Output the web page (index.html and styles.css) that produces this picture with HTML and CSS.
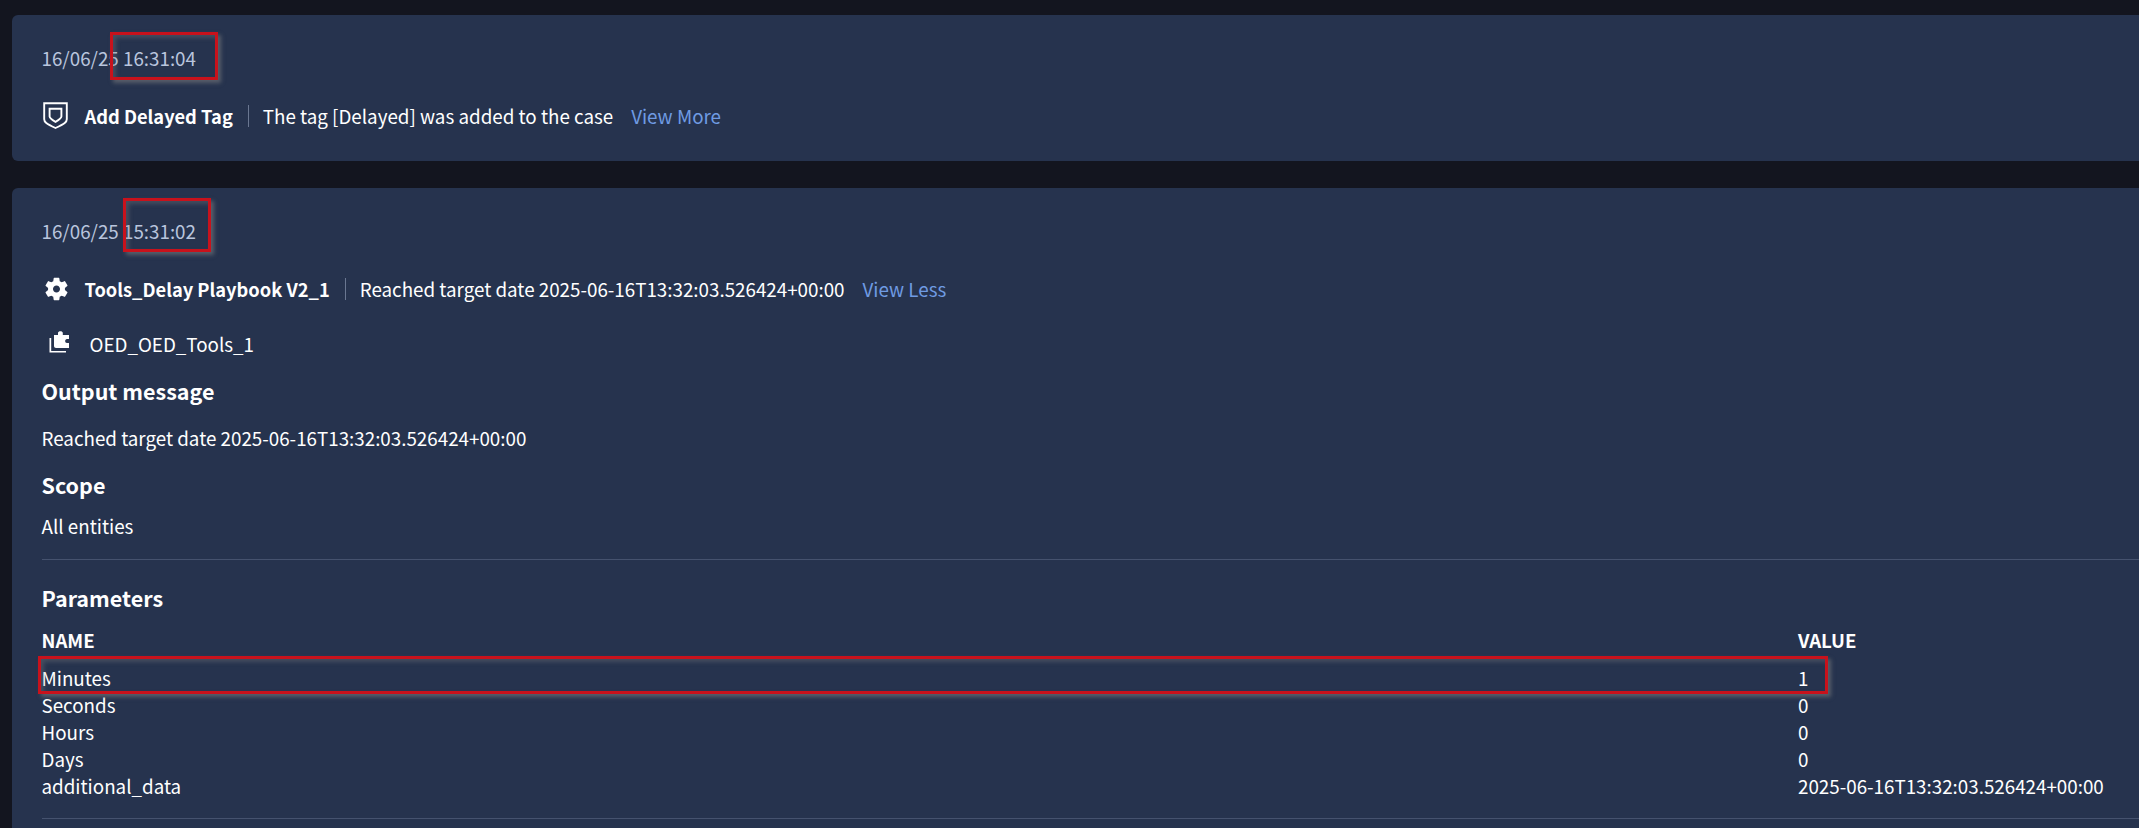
FILE: index.html
```html
<!DOCTYPE html>
<html lang="en">
<head>
<meta charset="utf-8">
<title>Case timeline</title>
<link rel="stylesheet" href="styles.css">
</head>
<body>
<main class="timeline">
  <section class="card card-short">
    <div class="date">16/06/25 16:31:04</div>
    <div class="event">
      <svg class="icon icon-shield" viewBox="0 0 25 27" fill="none" stroke="#fff" stroke-width="1.9"><path d="M1.2 1.2H23.8V17.2C23.8 20 22 21.6 12.5 26C3 21.6 1.2 20 1.2 17.2Z"/><path d="M6.6 6.8H18.4V14.6C18.4 16.2 17.4 17.2 12.5 19.8C7.6 17.2 6.6 16.2 6.6 14.6Z"/></svg>
      <strong class="event-name">Add Delayed Tag</strong>
      <span class="sep"></span>
      <span>The tag [Delayed] was added to the case</span>
      <a class="link">View More</a>
    </div>
    <div class="mark mark-a"></div>
  </section>
  <section class="card card-long">
    <div class="date">16/06/25 15:31:02</div>
    <div class="event">
      <svg class="icon icon-gear" viewBox="2.4 1.8 19.2 20.4" fill="#fff"><path fill-rule="evenodd" d="M19.14 12.94c.04-.3.06-.61.06-.94 0-.32-.02-.64-.07-.94l2.03-1.58c.18-.14.23-.41.12-.61l-1.92-3.32c-.12-.22-.37-.29-.59-.22l-2.39.96c-.5-.38-1.03-.7-1.62-.94l-.36-2.54c-.04-.24-.24-.41-.48-.41h-3.84c-.24 0-.43.17-.47.41l-.36 2.54c-.59.24-1.13.57-1.62.94l-2.39-.96c-.22-.08-.47 0-.59.22L2.74 8.87c-.12.21-.08.47.12.61l2.03 1.58c-.05.3-.09.63-.09.94s.02.64.07.94l-2.03 1.58c-.18.14-.23.41-.12.61l1.92 3.32c.12.22.37.29.59.22l2.39-.96c.5.38 1.03.7 1.62.94l.36 2.54c.05.24.24.41.48.41h3.84c.24 0 .44-.17.47-.41l.36-2.54c.59-.24 1.13-.56 1.62-.94l2.39.96c.22.08.47 0 .59-.22l1.92-3.32c.12-.22.07-.47-.12-.61l-2.01-1.58zM12 15c-1.65 0-3-1.35-3-3s1.35-3 3-3 3 1.35 3 3-1.35 3-3 3z"/></svg>
      <strong class="event-name">Tools_Delay Playbook V2_1</strong>
      <span class="sep"></span>
      <span>Reached target date 2025-06-16T13:32:03.526424+00:00</span>
      <a class="link">View Less</a>
    </div>
    <div class="integration">
      <svg class="icon icon-plugin" viewBox="0 0 22 24" fill="#fff"><path d="M5 17V6H9V4C9 1.5 13.8 1.5 13.8 4V6H20V10H18C15.6 10 15.6 14 18 14H20V19H7C5.9 19 5 18.1 5 17Z"/><path d="M0.5 9H2.2V22H17V23.6H0.5Z"/></svg>
      <span>OED_OED_Tools_1</span>
    </div>
    <h2 class="heading heading-output">Output message</h2>
    <p class="text text-output">Reached target date 2025-06-16T13:32:03.526424+00:00</p>
    <h2 class="heading heading-scope">Scope</h2>
    <p class="text text-scope">All entities</p>
    <hr class="rule">
    <h2 class="heading heading-params">Parameters</h2>
    <table class="params">
      <thead>
        <tr><th class="col-name">NAME</th><th>VALUE</th></tr>
      </thead>
      <tbody>
        <tr><td>Minutes</td><td>1</td></tr>
        <tr><td>Seconds</td><td>0</td></tr>
        <tr><td>Hours</td><td>0</td></tr>
        <tr><td>Days</td><td>0</td></tr>
        <tr><td>additional_data</td><td>2025-06-16T13:32:03.526424+00:00</td></tr>
      </tbody>
    </table>
    <hr class="rule rule-end">
    <div class="mark mark-b"></div>
    <div class="mark mark-c"></div>
  </section>
</main>
</body>
</html>
```
FILE: styles.css
```css
* { box-sizing: border-box; }
html, body { height: 100%; }
body {
  margin: 0;
  overflow: hidden;
  background: #13151f;
  color: #fff;
  font-family: "Noto Sans CJK SC", "Noto Sans", sans-serif;
  font-size: 18.8px;
  line-height: 27px;
}
.timeline {
  display: flex;
  flex-direction: column;
  gap: 27px;
  padding: 15px 0 0 12px;
}
.card {
  position: relative;
  background: #26334e;
  border-radius: 6px 0 0 6px;
  padding: 29px 0 0 29.5px;
}
.card-short { height: 146px; }
.card-long { height: 700px; border-radius: 6px 0 0 0; }
.date { color: #b9c5dd; }
.event {
  display: flex;
  align-items: center;
  height: 27px;
  margin-top: 31px;
}
.event-name { padding-top: 2px; font-size: 18.3px; font-weight: 700; }
.icon { display: block; flex: none; }
.icon-shield { width: 25px; height: 27px; margin: 0 17px 0 1px; }
.icon-gear { width: 23px; height: 24px; margin: 0 17px 0 3px; }
.icon-plugin { width: 22px; height: 24px; margin: -5px 19px 0 7px; }
.sep {
  width: 1px;
  height: 22px;
  margin: 0 14px 0 15px;
  background: #6a7791;
}
.link { margin-left: 18px; color: #6f9be3; }
.integration {
  display: flex;
  align-items: center;
  margin-top: 28px;
}
.heading {
  margin: 0;
  font-size: 21.5px;
  font-weight: 700;
  line-height: 30px;
}
.text { margin: 0; }
.heading-output { margin-top: 19px; }
.text-output { margin-top: 18px; }
.heading-scope { margin-top: 19px; }
.text-scope { margin-top: 12px; }
.rule {
  height: 1px;
  margin: 20px 0 0;
  border: 0;
  background: #45526e;
}
.heading-params { margin-top: 23px; }
.params {
  width: 100%;
  margin-top: 13px;
  border-collapse: collapse;
  table-layout: fixed;
}
.params th, .params td {
  padding: 0;
  text-align: left;
  height: 27px;
  font-weight: 400;
}
.params th { font-size: 18.6px; font-weight: 700; height: 28px; vertical-align: top; }
.params thead tr { height: 38px; }
.col-name { width: 1756.5px; }
.rule-end { margin-top: 19px; }
.mark {
  position: absolute;
  border: 3px solid #c8121c;
  box-shadow: 3px 3px 4px rgba(130, 130, 130, 0.55), inset 3px 3px 4px rgba(130, 130, 130, 0.35);
  pointer-events: none;
}
.mark-a { left: 98px; top: 17px; width: 108px; height: 48px; }
.mark-b { left: 111px; top: 10px; width: 88px; height: 54px; }
.mark-c { left: 26px; top: 468px; width: 1790px; height: 38px; }
```
